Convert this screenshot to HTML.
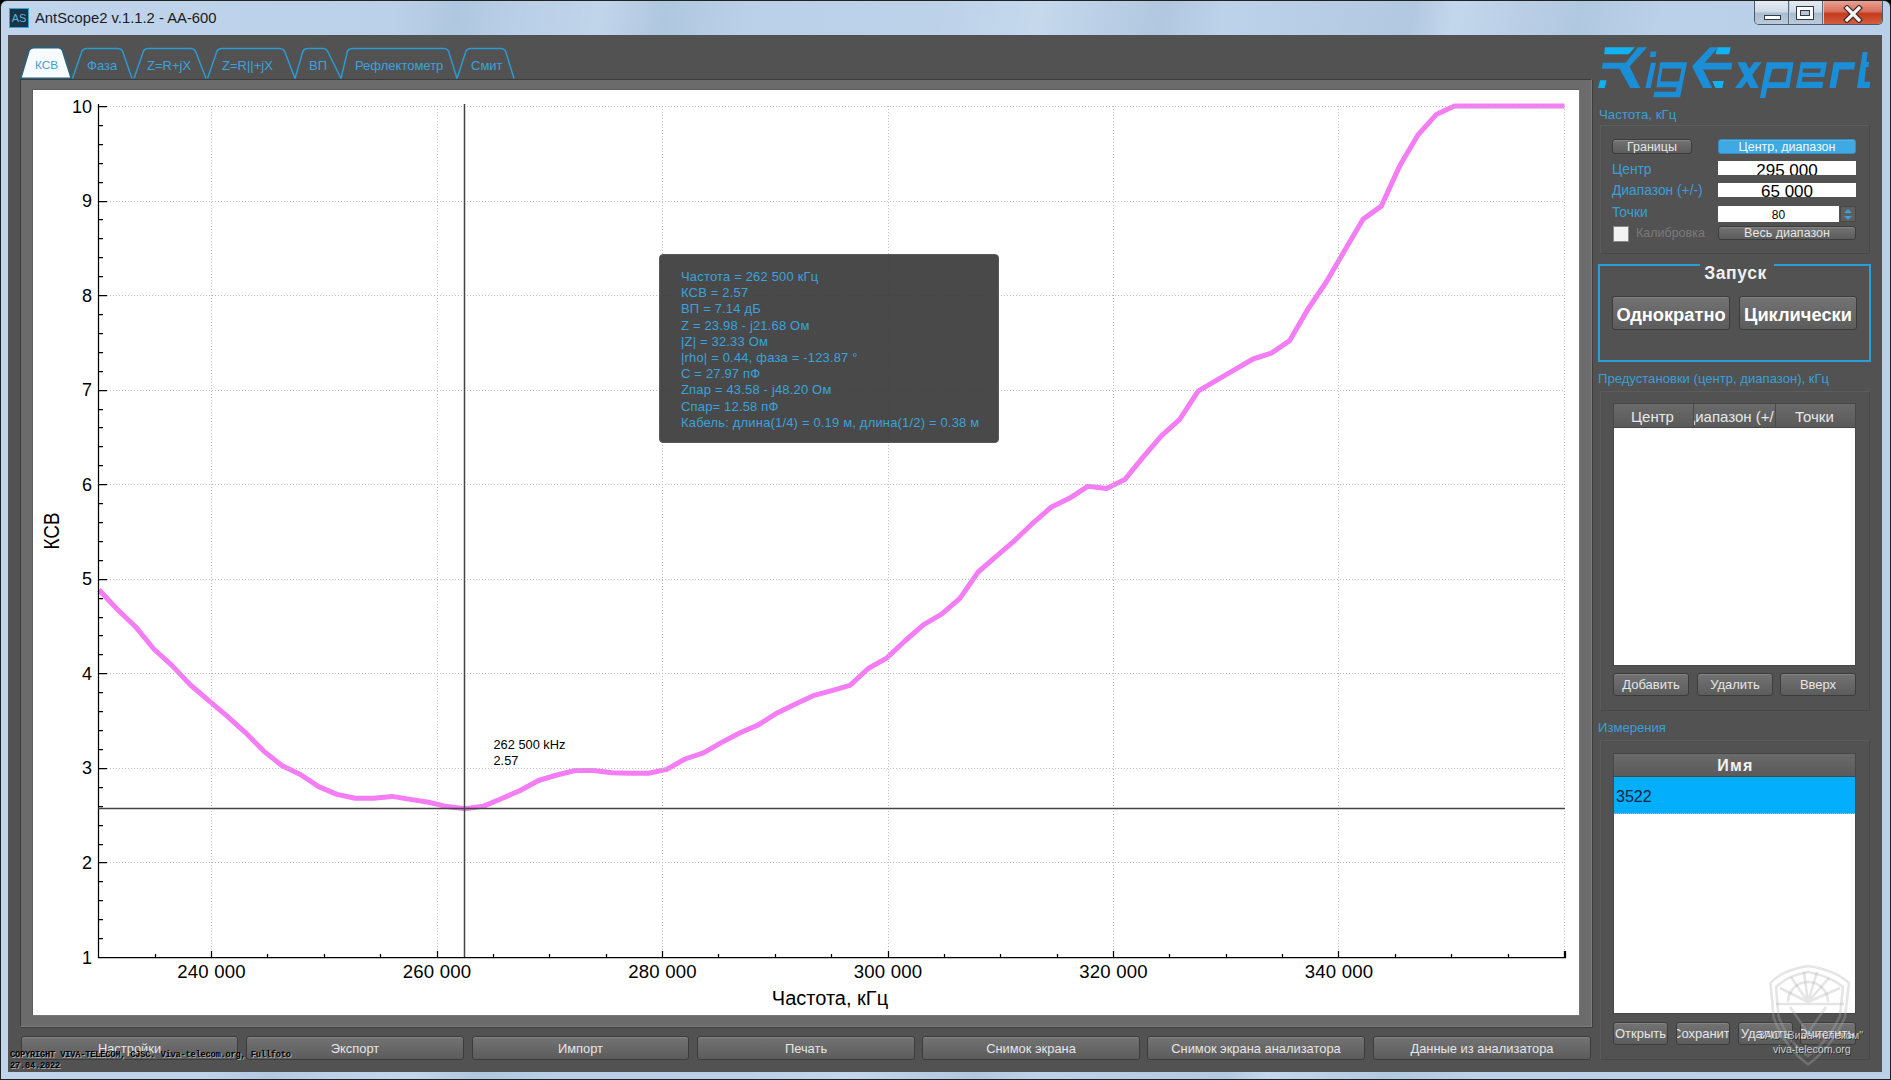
<!DOCTYPE html>
<html><head><meta charset="utf-8">
<style>
*{margin:0;padding:0;box-sizing:border-box}
html,body{width:1891px;height:1080px;overflow:hidden;background:#000;font-family:"Liberation Sans",sans-serif}
.a{position:absolute}
#win{left:0;top:0;width:1891px;height:1080px;border-radius:7px 7px 0 0;background:linear-gradient(100deg,rgba(0,0,0,0) 19%,rgba(90,120,150,0.10) 22%,rgba(0,0,0,0) 25%,rgba(255,255,255,0.12) 29%,rgba(90,120,150,0.10) 32%,rgba(0,0,0,0) 36%,rgba(0,0,0,0) 45%,rgba(255,255,255,0.12) 50%,rgba(90,120,150,0.12) 56%,rgba(0,0,0,0) 59%,rgba(90,120,150,0.10) 68%,rgba(255,255,255,0.12) 70%,rgba(90,120,150,0.10) 76%,rgba(0,0,0,0) 80%),linear-gradient(90deg,#c0d5ec 0%,#b8cfe7 30%,#bdd3ea 55%,#b9d0e8 100%);border:1px solid #222}
#content{left:8px;top:35px;width:1874px;height:1037px;background:#525252}
.btn{position:absolute;border:1px solid #3c3c3c;border-radius:3px;background:linear-gradient(#737373,#5c5c5c);box-shadow:inset 0 1px 0 rgba(255,255,255,0.12);color:#e6e6e6;text-align:center;font-size:13px;white-space:nowrap;overflow:hidden}
.cy{color:#3a9fd6}
.tab{position:absolute;top:48px;height:31px}
.tabt{position:absolute;top:58px;font-size:13px;color:#3ba3dc;white-space:nowrap}
.inp{position:absolute;background:#fff;color:#000;text-align:center;overflow:hidden;white-space:nowrap}
</style></head><body>
<div id="win" class="a"></div>
<!-- title -->
<div class="a" style="left:9px;top:8px;width:20px;height:20px;background:#1b3347;border:1px solid #39a6d6;color:#5ab6e0;font-size:11px;line-height:18px;text-align:center">AS</div>
<div class="a" style="left:35px;top:10px;font-size:14.8px;color:#1b1b1b;white-space:nowrap">AntScope2 v.1.1.2 - AA-600</div>
<!-- window buttons -->
<div class="a" style="left:1754px;top:1px;width:129px;height:24px;border:1px solid #4a5a6a;border-top:none;border-radius:0 0 5px 5px;overflow:hidden">
 <div class="a" style="left:0;top:0;width:34px;height:23px;background:linear-gradient(#e4ebf2,#cfdbe7 45%,#a9bccf 55%,#bccbdb);border-right:1px solid #5a6a7a"></div>
 <div class="a" style="left:35px;top:0;width:33px;height:23px;background:linear-gradient(#e4ebf2,#cfdbe7 45%,#a9bccf 55%,#bccbdb);border-right:1px solid #5a6a7a"></div>
 <div class="a" style="left:69px;top:0;width:60px;height:23px;background:linear-gradient(#e9a195,#d8705c 45%,#c4391d 55%,#d2603f)"></div>
 <div class="a" style="left:9px;top:14px;width:17px;height:5px;background:#fff;border:1px solid #2e3a48"></div>
 <div class="a" style="left:41px;top:5px;width:18px;height:14px;border:1px solid #2e3a48;background:#fff"><div class="a" style="left:3px;top:3px;width:10px;height:6px;border:1px solid #2e3a48;background:#b8c6d4"></div></div>
 <svg class="a" style="left:88px;top:4px" width="20" height="18" viewBox="0 0 20 18"><path d="M4 3L16 15M16 3L4 15" stroke="#3a2424" stroke-width="5.5" stroke-linecap="square"/><path d="M4 3L16 15M16 3L4 15" stroke="#f4f4f4" stroke-width="3.2" stroke-linecap="square"/></svg>
</div>
<div id="content" class="a"></div>
<!-- tabs -->
<svg class="a" style="left:0;top:40px" width="530" height="42">
 <path d="M20.5 38.5 L29 10 Q31 7.5 34 7.5 L58 7.5 Q61 7.5 62.5 10 L71.5 38.5 Z" fill="#f6fbfe" stroke="#2d5f78" stroke-width="2"/>
 <g fill="none" stroke="#2c9ad2" stroke-width="1.5">
  <path d="M72.5 38.5 L82 11 Q83.5 8.5 87 8.5 L118 8.5 Q121 8.5 122.5 11 L132 38.5"/>
  <path d="M134 38.5 L143.5 11 Q145 8.5 148.5 8.5 L191 8.5 Q194 8.5 195.5 11 L206 38.5"/>
  <path d="M207.5 38.5 L217 11 Q218.5 8.5 222 8.5 L280 8.5 Q283 8.5 284.5 11 L295 38.5"/>
  <path d="M295 38.5 L303 11 Q304.5 8.5 308 8.5 L323 8.5 Q326 8.5 327.5 11 L341 38.5"/>
  <path d="M341 38.5 L347.5 11 Q349 8.5 352.5 8.5 L444 8.5 Q447 8.5 448.5 11 L457 38.5"/>
  <path d="M457 38.5 L466 11 Q467.5 8.5 471 8.5 L501 8.5 Q504 8.5 505.5 11 L514 38.5"/>
 </g>
</svg>
<div class="tabt" style="left:35px;top:57.5px;font-size:11.8px;color:#3d9dd0">КСВ</div>
<div class="tabt" style="left:87px">Фаза</div>
<div class="tabt" style="left:147px">Z=R+jX</div>
<div class="tabt" style="left:222px">Z=R||+jX</div>
<div class="tabt" style="left:309px">ВП</div>
<div class="tabt" style="left:355px">Рефлектометр</div>
<div class="tabt" style="left:471px">Смит</div>
<!-- chart panel -->
<div class="a" style="left:20px;top:79px;width:1572px;height:948px;background:#6b6b6b;border:1px solid #3c3c3c;border-right-color:#7c7c7c;border-bottom-color:#7c7c7c;box-shadow:1px 1px 0 #3e3e3e"></div>
<div class="a" style="left:32px;top:89px;width:1548px;height:927px;background:#fff;border:1px solid #5e5e5e;border-right-color:#777;border-bottom-color:#777"></div>
<svg id="chart" width="1891" height="1080" style="position:absolute;left:0;top:0">
<polyline points="98.9,589.7 117.2,609.2 135.5,626.7 153.8,649.0 172.1,665.6 190.5,685.0 208.8,700.6 227.1,716.1 245.4,732.6 263.7,751.1 282.1,765.7 300.4,774.5 318.7,786.6 337.0,794.4 355.3,798.3 373.7,798.3 392.0,796.4 410.3,799.4 428.6,802.2 446.9,806.6 465.3,808.8 483.6,806.1 501.9,798.5 520.2,790.5 538.5,780.5 556.9,775.0 575.2,770.5 593.5,770.5 611.8,772.8 630.1,773.3 648.5,773.3 666.8,769.4 685.1,759.0 703.4,752.8 721.7,742.4 740.1,732.7 758.4,724.9 776.7,713.2 795.0,704.2 813.3,695.7 831.7,690.6 850.0,685.4 868.3,668.5 886.6,658.1 904.9,641.0 923.3,624.8 941.6,614.2 959.9,598.4 978.2,572.0 996.5,556.2 1014.9,540.3 1033.2,522.8 1051.5,506.9 1069.8,498.1 1088.1,486.2 1106.5,488.5 1124.8,479.6 1143.1,457.2 1161.4,435.8 1179.7,419.3 1198.1,391.1 1216.4,380.4 1234.7,369.7 1253.0,359.0 1271.3,353.2 1289.7,340.6 1308.0,309.0 1326.3,282.0 1344.6,250.6 1362.9,219.4 1381.3,206.1 1399.6,166.1 1417.9,135.0 1436.2,114.6 1454.5,106.1 1472.9,106.0 1491.2,106.0 1509.5,106.0 1527.8,106.0 1546.1,106.0 1564.5,106.0" fill="none" stroke="#f47cf4" stroke-width="5" stroke-linejoin="round"/>
<path d="M211.5 106V957 M437.5 106V957 M662.5 106V957 M888.5 106V957 M1113.5 106V957 M1338.5 106V957 M1564.5 106V957 M98 862.5H1565 M98 768.5H1565 M98 673.5H1565 M98 579.5H1565 M98 484.5H1565 M98 390.5H1565 M98 295.5H1565 M98 201.5H1565 M98 106.5H1565" stroke="#bdbdbd" stroke-width="1" stroke-dasharray="1 2" fill="none"/>
<path d="M98.5 104V957.5H1565.5V951 M98 957.5H107 M98 938.5H103 M98 919.5H103 M98 900.5H103 M98 881.5H103 M98 862.5H107 M98 844.5H103 M98 825.5H103 M98 806.5H103 M98 787.5H103 M98 768.5H107 M98 749.5H103 M98 730.5H103 M98 711.5H103 M98 692.5H103 M98 673.5H107 M98 654.5H103 M98 635.5H103 M98 617.5H103 M98 598.5H103 M98 579.5H107 M98 560.5H103 M98 541.5H103 M98 522.5H103 M98 503.5H103 M98 484.5H107 M98 465.5H103 M98 446.5H103 M98 427.5H103 M98 409.5H103 M98 390.5H107 M98 371.5H103 M98 352.5H103 M98 333.5H103 M98 314.5H103 M98 295.5H107 M98 276.5H103 M98 257.5H103 M98 238.5H103 M98 219.5H103 M98 201.5H107 M98 182.5H103 M98 163.5H103 M98 144.5H103 M98 125.5H103 M98 106.5H107 M98.5 957V954 M155.5 957V954 M211.5 957V951 M267.5 957V954 M324.5 957V954 M380.5 957V954 M437.5 957V951 M493.5 957V954 M549.5 957V954 M606.5 957V954 M662.5 957V951 M718.5 957V954 M775.5 957V954 M831.5 957V954 M888.5 957V951 M944.5 957V954 M1000.5 957V954 M1057.5 957V954 M1113.5 957V951 M1169.5 957V954 M1226.5 957V954 M1282.5 957V954 M1338.5 957V951 M1395.5 957V954 M1451.5 957V954 M1508.5 957V954 M1564.5 957V951" stroke="#000" stroke-width="1.25" fill="none"/>
<text x="92" y="963.5" text-anchor="end" font-size="18" font-family="Liberation Sans">1</text>
<text x="92" y="868.9" text-anchor="end" font-size="18" font-family="Liberation Sans">2</text>
<text x="92" y="774.4" text-anchor="end" font-size="18" font-family="Liberation Sans">3</text>
<text x="92" y="679.8" text-anchor="end" font-size="18" font-family="Liberation Sans">4</text>
<text x="92" y="585.3" text-anchor="end" font-size="18" font-family="Liberation Sans">5</text>
<text x="92" y="490.7" text-anchor="end" font-size="18" font-family="Liberation Sans">6</text>
<text x="92" y="396.1" text-anchor="end" font-size="18" font-family="Liberation Sans">7</text>
<text x="92" y="301.6" text-anchor="end" font-size="18" font-family="Liberation Sans">8</text>
<text x="92" y="207.0" text-anchor="end" font-size="18" font-family="Liberation Sans">9</text>
<text x="92" y="112.5" text-anchor="end" font-size="18" font-family="Liberation Sans">10</text>
<text x="211.6" y="978" text-anchor="middle" font-size="18.6" letter-spacing="0.2" font-family="Liberation Sans">240 000</text>
<text x="437.1" y="978" text-anchor="middle" font-size="18.6" letter-spacing="0.2" font-family="Liberation Sans">260 000</text>
<text x="662.6" y="978" text-anchor="middle" font-size="18.6" letter-spacing="0.2" font-family="Liberation Sans">280 000</text>
<text x="888.0" y="978" text-anchor="middle" font-size="18.6" letter-spacing="0.2" font-family="Liberation Sans">300 000</text>
<text x="1113.5" y="978" text-anchor="middle" font-size="18.6" letter-spacing="0.2" font-family="Liberation Sans">320 000</text>
<text x="1339.0" y="978" text-anchor="middle" font-size="18.6" letter-spacing="0.2" font-family="Liberation Sans">340 000</text>
<text x="830" y="1005" text-anchor="middle" font-size="20" font-family="Liberation Sans">Частота, кГц</text>
<text transform="translate(58.8,531) rotate(-90) scale(0.97,1.1)" text-anchor="middle" font-size="19.5" font-family="Liberation Sans">КСВ</text>
<path d="M464.5 104V957M98 808.5H1565" stroke="#444" stroke-width="1.5" fill="none"/>
<text x="493.5" y="749" font-size="12.8" font-family="Liberation Sans">262 500 kHz</text>
<text x="493.5" y="765" font-size="12.8" font-family="Liberation Sans">2.57</text>
</svg>
<!-- tooltip -->
<div class="a" style="left:659px;top:254px;width:340px;height:189px;background:rgba(58,58,58,0.92);border:1px solid #5a5a5a;border-radius:4px;color:#3aa2dc;font-size:13px;letter-spacing:0.17px;line-height:16.2px;padding:14px 0 0 21px;white-space:nowrap">Частота = 262 500 кГц<br>КСВ = 2.57<br>ВП = 7.14 дБ<br>Z = 23.98 - j21.68 Ом<br>|Z| = 32.33 Ом<br>|rho| = 0.44, фаза = -123.87 °<br>C = 27.97 пФ<br>Zпар = 43.58 - j48.20 Ом<br>Спар= 12.58 пФ<br>Кабель: длина(1/4) = 0.19 м, длина(1/2) = 0.38 м</div>
<!-- sidebar -->
<svg class="a" style="left:1590px;top:38px" width="290" height="67" viewBox="0 0 1891 437"><g fill="#1b8ed8"><path fill-rule="evenodd" d="M312.6,61.1 L372.6,61.1 L257.6,186.1 L327.6,326.1 L262.6,326.1 L192.6,201.1 L77.6,201.1 L82.6,161.1 L232.6,161.1Z"/><path fill-rule="evenodd" d="M397.6,161.1 L430.1,161.1 L395.1,326.1 L360.1,326.1Z"/><path fill-rule="evenodd" d="M395.1,88.6 L432.6,88.6 L427.6,123.6 L390.1,123.6Z"/><path fill-rule="evenodd" d="M457.6,158.6 L632.6,158.6 L587.6,386.1 L412.6,386.1 L420.1,351.1 L557.6,351.1 L565.1,321.1 L432.6,321.1ZM472.6,198.6 L597.6,198.6 L580.1,283.6 L457.6,283.6Z"/><path fill-rule="evenodd" d="M782.6,61.1 L837.6,61.1 L727.6,183.6 L797.6,326.1 L737.6,326.1 L665.1,183.6Z"/><path fill-rule="evenodd" d="M697.6,161.1 L927.6,161.1 L922.6,206.1 L690.1,206.1Z"/><path fill-rule="evenodd" d="M960.4,158.6 L1015.4,158.6 L1100.4,326.1 L1045.4,326.1Z"/><path fill-rule="evenodd" d="M1070.4,158.6 L1120.4,158.6 L990.4,326.1 L945.4,326.1Z"/><path fill-rule="evenodd" d="M1152.9,158.6 L1327.9,158.6 L1300.4,326.1 L1155.4,326.1 L1142.9,391.1 L1107.9,391.1ZM1190.4,201.1 L1290.4,201.1 L1275.4,288.6 L1165.4,288.6Z"/><path fill-rule="evenodd" d="M1375.4,158.6 L1545.4,158.6 L1527.9,253.6 L1385.4,253.6 L1380.4,286.1 L1520.4,286.1 L1515.4,326.1 L1342.9,326.1ZM1390.4,198.6 L1505.4,198.6 L1500.4,226.1 L1385.4,226.1Z"/><path fill-rule="evenodd" d="M1590.4,158.6 L1730.4,158.6 L1722.9,206.1 L1625.4,206.1 L1602.9,326.1 L1560.4,326.1Z"/><path fill-rule="evenodd" d="M1777.9,91.1 L1810.4,91.1 L1785.4,326.1 L1740.4,326.1Z"/><path fill-rule="evenodd" d="M1790.4,156.1 L1820.4,156.1 L1815.4,188.6 L1785.4,188.6Z"/><path fill-rule="evenodd" d="M1765.4,286.1 L1827.9,286.1 L1822.9,326.1 L1760.4,326.1Z"/></g><path fill="#10b2f2" d="M65.1,276.1 L107.6,276.1 L95.1,326.1 L52.6,326.1Z M97.6,61.1 L292.6,61.1 L252.6,106.1 L92.6,106.1Z M832.6,61.1 L917.6,61.1 L907.6,106.1 L817.6,106.1Z M797.6,281.1 L872.6,281.1 L862.6,326.1 L817.6,326.1Z"/></svg>
<div class="a cy" style="left:1599px;top:107px;font-size:13.3px;white-space:nowrap">Частота, кГц</div>
<div class="a" style="left:1600px;top:125px;width:270px;height:129px;border:1px solid #5c5c5c;border-right-color:#484848;border-bottom-color:#484848"></div>
<div class="btn" style="left:1612px;top:139px;width:80px;height:15px;line-height:14px;font-size:12.5px">Границы</div>
<div class="btn" style="left:1718px;top:139px;width:138px;height:15px;line-height:14px;font-size:12.5px;background:#3ea9e3;border-color:#3a8cc0;color:#f4f8fb">Центр, диапазон</div>
<div class="a cy" style="left:1612px;top:162px;font-size:13.8px">Центр</div>
<div class="inp" style="left:1718px;top:161px;width:138px;height:14px;font-size:17px;line-height:20px">295 000</div>
<div class="a cy" style="left:1612px;top:183px;font-size:13.8px">Диапазон (+/-)</div>
<div class="inp" style="left:1718px;top:183px;width:138px;height:14px;font-size:17px;line-height:17px">65 000</div>
<div class="a cy" style="left:1612px;top:205px;font-size:13.8px">Точки</div>
<div class="inp" style="left:1718px;top:206px;width:121px;height:16px;font-size:12px;line-height:18px">80</div>
<div class="a" style="left:1840px;top:206px;width:16px;height:16px;background:#5e5e5e;border:1px solid #484848"><svg width="14" height="14" style="position:absolute;left:0;top:0"><path d="M3 6L7 2L11 6Z M3 9L7 13L11 9Z" fill="#3aa0d8"/></svg></div>
<div class="a" style="left:1613px;top:226px;width:16px;height:16px;background:#f2f2f2;border:1px solid #888"></div>
<div class="a" style="left:1636px;top:226px;font-size:12.5px;color:#7a7a7a">Калибровка</div>
<div class="btn" style="left:1718px;top:226px;width:138px;height:14px;line-height:13px;font-size:12.5px">Весь диапазон</div>
<!-- Zapusk -->
<div class="a" style="left:1598px;top:264px;width:273px;height:98px;border:2px solid #2a9ed8"></div>
<div class="a" style="left:1700px;top:262px;width:74px;height:6px;background:#525252"></div>
<div class="a" style="left:1598px;top:263px;width:273px;text-align:center;font-size:17.5px;letter-spacing:0.6px;font-weight:bold;color:#f0f0f0;padding-left:2px">Запуск</div>
<div class="btn" style="left:1612px;top:296px;width:118px;height:34px;line-height:35px;font-size:18.3px;font-weight:bold;color:#fff">Однократно</div>
<div class="btn" style="left:1739px;top:296px;width:118px;height:34px;line-height:35px;font-size:18.3px;font-weight:bold;color:#fff">Циклически</div>
<div class="a cy" style="left:1598px;top:371px;font-size:13.1px;white-space:nowrap">Предустановки (центр, диапазон), кГц</div>
<div class="a" style="left:1600px;top:391px;width:270px;height:320px;border:1px solid #5c5c5c;border-right-color:#484848;border-bottom-color:#484848"></div>
<div class="a" style="left:1613px;top:403px;width:243px;height:25px;background:linear-gradient(#6a6a6a,#5a5a5a);border:1px solid #474747;color:#e8e8e8;font-size:15px;line-height:25px;overflow:hidden;white-space:nowrap">
 <span class="a" style="left:17px;top:0">Центр</span>
 <span class="a" style="left:79px;top:0;width:1px;height:24px;background:#4a4a4a"></span>
 <span class="a" style="left:80px;top:0;width:81px;overflow:hidden;white-space:nowrap"><span style="margin-left:-9px">Диапазон (+/</span></span>
 <span class="a" style="left:161px;top:0;width:1px;height:24px;background:#4a4a4a"></span>
 <span class="a" style="left:181px;top:0">Точки</span>
</div>
<div class="a" style="left:1613px;top:428px;width:243px;height:238px;background:#fff;border-left:1px solid #474747;border-right:1px solid #474747;border-bottom:1px solid #474747"></div>
<div class="btn" style="left:1613px;top:673px;width:76px;height:23px;line-height:22px;font-size:13px">Добавить</div>
<div class="btn" style="left:1697px;top:673px;width:76px;height:23px;line-height:22px;font-size:13px">Удалить</div>
<div class="btn" style="left:1780px;top:673px;width:76px;height:23px;line-height:22px;font-size:13px">Вверх</div>
<div class="a cy" style="left:1598px;top:720px;font-size:13.1px">Измерения</div>
<div class="a" style="left:1600px;top:740px;width:270px;height:320px;border:1px solid #5c5c5c;border-right-color:#484848;border-bottom-color:#484848"></div>
<div class="a" style="left:1613px;top:753px;width:243px;height:24px;background:linear-gradient(#6a6a6a,#5a5a5a);border:1px solid #474747;color:#f2f2f2;font-size:16px;letter-spacing:1.2px;font-weight:bold;line-height:23px;text-align:center;padding-left:2px">Имя</div>
<div class="a" style="left:1613px;top:777px;width:243px;height:237px;background:#fff;border:1px solid #474747;border-top:none"></div>
<div class="a" style="left:1614px;top:777px;width:241px;height:37px;background:#03aefc;color:#0c2440;font-size:15px;line-height:39px;overflow:hidden;white-space:nowrap;border-bottom:1px dotted #7cd0f8"><span style="margin-left:2px;font-size:16px">3522</span></div>
<div class="btn" style="left:1613px;top:1022px;width:55px;height:23px;line-height:22px;font-size:13px">Открыть</div>
<div class="btn" style="left:1676px;top:1022px;width:54px;height:23px;line-height:22px;font-size:13px"><span style="margin-left:-5px">Сохранить</span></div>
<div class="btn" style="left:1738px;top:1022px;width:55px;height:23px;line-height:22px;font-size:13px">Удалить</div>
<div class="btn" style="left:1800px;top:1022px;width:56px;height:23px;line-height:22px;font-size:13px"><span style="margin-left:-4px">Очистить</span></div>

<!-- bottom buttons -->
<div class="btn" style="left:21px;top:1036px;width:217px;height:24px;line-height:23px;font-size:12.9px">Настройки</div>
<div class="btn" style="left:246px;top:1036px;width:218px;height:24px;line-height:23px;font-size:12.9px">Экспорт</div>
<div class="btn" style="left:472px;top:1036px;width:217px;height:24px;line-height:23px;font-size:12.9px">Импорт</div>
<div class="btn" style="left:697px;top:1036px;width:218px;height:24px;line-height:23px;font-size:12.9px">Печать</div>
<div class="btn" style="left:922px;top:1036px;width:218px;height:24px;line-height:23px;font-size:12.9px">Снимок экрана</div>
<div class="btn" style="left:1147px;top:1036px;width:218px;height:24px;line-height:23px;font-size:12.9px">Снимок экрана анализатора</div>
<div class="btn" style="left:1373px;top:1036px;width:218px;height:24px;line-height:23px;font-size:12.9px">Данные из анализатора</div>
<!-- copyright -->
<div class="a" style="left:10px;top:1050px;font-family:'Liberation Mono',monospace;font-weight:bold;font-size:8.7px;line-height:10.5px;color:#000;text-shadow:1px 1px 0 rgba(255,255,255,0.5);white-space:nowrap;letter-spacing:-0.2px">COPYRIGHT VIVA-TELECOM, CJSC. Viva-telecom.org, Fullfoto<br>27.04.2022</div>
<!-- watermark -->
<svg class="a" style="left:1760px;top:955px" width="110" height="120" viewBox="0 0 110 120">
 <g fill="none" stroke="rgba(175,175,175,0.32)" stroke-width="2.6" stroke-linejoin="round">
  <path d="M10.5 28 Q22 15 48 11 Q75 15 89 28 L85 62 Q72 92 48 109.5 Q24 92 13.5 62 Z"/>
  <path d="M16 32 Q27 21 48 17 Q70 21 83 32 L80 61 Q69 86 48 101 Q27 86 18.5 61 Z"/>
  <path d="M48 47 L20 33 M48 47 L31 22 M48 47 L44 17 M48 47 L57 17 M48 47 L69 23 M48 47 L80 33"/>
  <path d="M28 47 A20 20 0 0 1 68 47"/>
  <path d="M16 49 H84 M30 52 L48 78 L66 52"/>
 </g>
</svg>
<div class="a" style="left:1758px;top:1029px;font-size:11px;letter-spacing:0px;color:rgba(235,235,235,0.75);text-shadow:1px 1px 0 rgba(0,0,0,0.45);white-space:nowrap">ЗАО "Вива-Телеком"</div>
<div class="a" style="left:1773px;top:1043px;font-size:10.6px;color:rgba(240,240,240,0.8);text-shadow:1px 1px 0 rgba(0,0,0,0.45);white-space:nowrap">viva-telecom.org</div>

</body></html>
